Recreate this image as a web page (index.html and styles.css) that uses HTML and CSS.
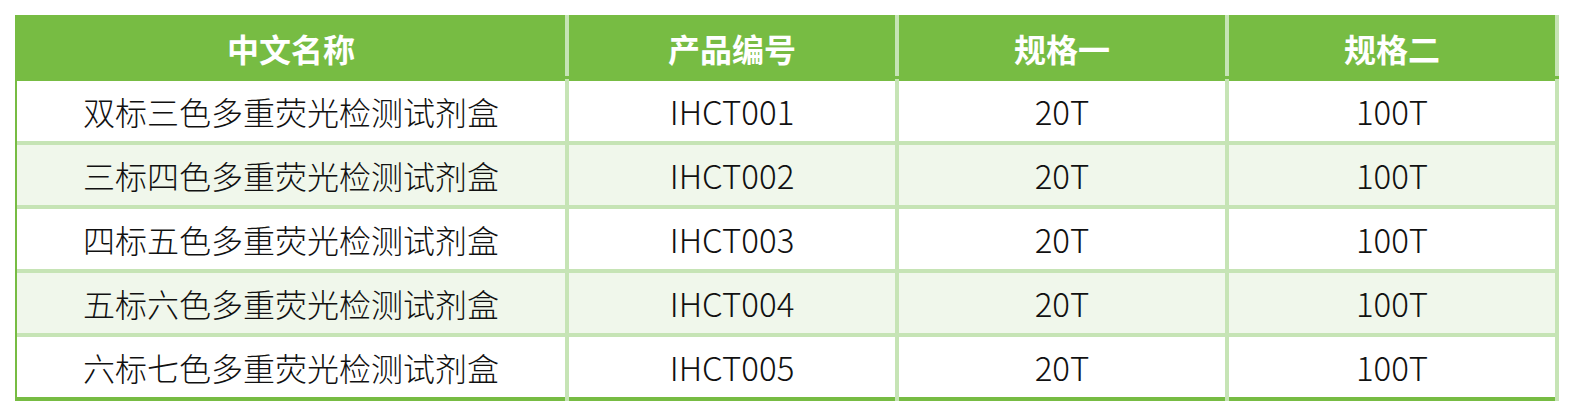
FILE: index.html
```html
<!DOCTYPE html>
<html lang="zh-CN">
<head>
<meta charset="utf-8">
<title>产品列表</title>
<link rel="stylesheet" href="styles.css">
</head>
<body>
<div class="page">
  <div class="table">
    <div class="row head">
      <div class="cell">中文名称</div>
      <div class="cell">产品编号</div>
      <div class="cell">规格一</div>
      <div class="cell">规格二</div>
    </div>
    <div class="row">
      <div class="cell">双标三色多重荧光检测试剂盒</div>
      <div class="cell num">IHCT001</div>
      <div class="cell num">20T</div>
      <div class="cell num">100T</div>
    </div>
    <div class="row alt">
      <div class="cell">三标四色多重荧光检测试剂盒</div>
      <div class="cell num">IHCT002</div>
      <div class="cell num">20T</div>
      <div class="cell num">100T</div>
    </div>
    <div class="row">
      <div class="cell">四标五色多重荧光检测试剂盒</div>
      <div class="cell num">IHCT003</div>
      <div class="cell num">20T</div>
      <div class="cell num">100T</div>
    </div>
    <div class="row alt">
      <div class="cell">五标六色多重荧光检测试剂盒</div>
      <div class="cell num">IHCT004</div>
      <div class="cell num">20T</div>
      <div class="cell num">100T</div>
    </div>
    <div class="row last">
      <div class="cell">六标七色多重荧光检测试剂盒</div>
      <div class="cell num">IHCT005</div>
      <div class="cell num">20T</div>
      <div class="cell num">100T</div>
    </div>
  </div>
</div>
</body>
</html>
```

FILE: styles.css
```css
html, body {
  margin: 0;
  padding: 0;
  background: #ffffff;
}

.page {
  padding: 15px 0 0 15px;
  font-family: "Noto Sans CJK SC", "Noto Sans", sans-serif;
  color: #111111;
}

.table {
  width: 1542px;
  border-left: 2px solid #77bc43;
  background: #c6e4b5;
  display: flex;
  flex-direction: column;
}

.row {
  display: grid;
  grid-template-columns: 548px 326px 326px 326px;
  column-gap: 4px;
  padding-right: 4px;
  background: #c6e4b5;
}

.row + .row {
  margin-top: 4px;
}

.head + .row {
  margin-top: 0;
}

.cell {
  height: 60px;
  display: flex;
  align-items: center;
  justify-content: center;
  font-size: 32px;
  font-weight: 300;
  background: #ffffff;
  box-sizing: border-box;
  white-space: nowrap;
}

.num {
  font-size: 33px;
}

.alt .cell {
  background: #f0f7eb;
}

.last .cell {
  height: 64px;
  border-bottom: 4px solid #77bc43;
}

.head {
  background: linear-gradient(to bottom, #c6e4b5 0, #c6e4b5 61px, #77bc43 61px, #77bc43 64px, #c6e4b5 64px);
}

.head .cell {
  height: 66px;
  background: #77bc43;
  color: #ffffff;
  font-weight: 700;
}
```
